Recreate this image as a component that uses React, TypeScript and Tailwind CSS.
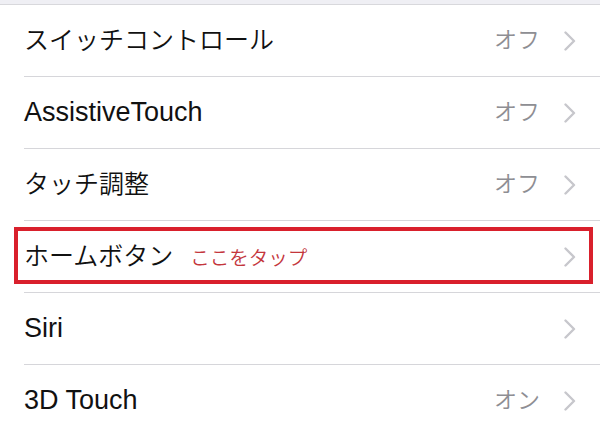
import React from "react";

type Row = {
  label: string;
  value?: string;
  highlight?: boolean;
  latin?: boolean;
};

const rows: Row[] = [
  { label: "スイッチコントロール", value: "オフ" },
  { label: "AssistiveTouch", value: "オフ", latin: true },
  { label: "タッチ調整", value: "オフ" },
  { label: "ホームボタン", highlight: true },
  { label: "Siri", latin: true },
  { label: "3D Touch", value: "オン", latin: true },
];

function Chevron() {
  return (
    <svg width="14" height="20" viewBox="0 0 14 20" className="shrink-0">
      <polyline
        points="2.5,1.5 11,10 2.5,18.5"
        fill="none"
        stroke="#c7c7cc"
        strokeWidth="2.4"
        strokeLinecap="round"
        strokeLinejoin="round"
      />
    </svg>
  );
}

export default function App() {
  return (
    <div
      className="w-[600px] h-[432px] overflow-hidden bg-white"
      style={{ fontFamily: '"Liberation Sans", "Noto Sans CJK JP", sans-serif' }}
    >
      {/* 上のグレー帯 */}
      <div className="h-[4px] bg-[#efeff4]" />
      <div className="h-px bg-[#d8d8dc]" />

      <div className="flex flex-col">
        {rows.map((row, i) => (
          <div key={i} className="relative pl-[24px]">
            <div className="h-[71px] flex items-center pr-[23px]">
              <span
                className={
                  row.latin
                    ? "text-[27px] text-[#111] leading-none"
                    : "text-[25px] font-[350] text-[#111] leading-none"
                }
              >
                {row.label}
              </span>
              {row.highlight && (
                <span className="ml-[17px] mt-[4px] text-[19.5px] font-[350] text-[#c4363c] leading-none">
                  ここをタップ
                </span>
              )}
              <div className="ml-auto flex items-center gap-[23px]">
                {row.value && (
                  <span className="text-[23px] font-[350] text-[#8e8e93] leading-none">{row.value}</span>
                )}
                <Chevron />
              </div>
            </div>
            <div className="h-px bg-[#d6d6da]" />
            {row.highlight && (
              <div className="absolute left-[14px] right-[7px] top-[6px] bottom-[9px] border-[4px] border-[#d9202c]" />
            )}
          </div>
        ))}
      </div>
    </div>
  );
}
